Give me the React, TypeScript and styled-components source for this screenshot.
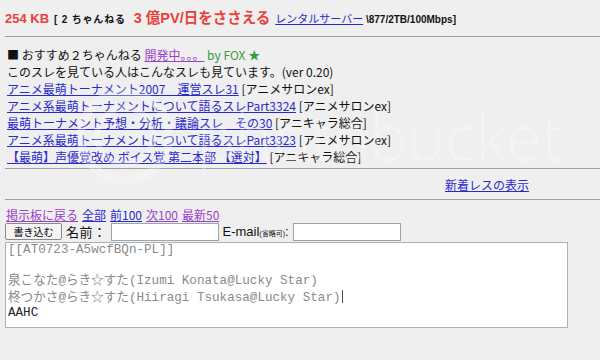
import React from 'react';
import styled, { createGlobalStyle } from 'styled-components';

const GlobalStyle = createGlobalStyle`
  html, body {
    margin: 0;
    padding: 0;
    background: #efefef;
  }
  body {
    font-family: 'Noto Sans CJK JP', 'Liberation Sans', sans-serif;
    font-size: 12px;
    color: #111;
  }
`;

const Page = styled.div`
  position: relative;
  width: 600px;
  height: 360px;
  overflow: hidden;
  padding: 0 0 0 5px;
  box-sizing: border-box;
`;

const TopBar = styled.div`
  display: flex;
  align-items: baseline;
  height: 36px;
  padding-top: 6px;
  box-sizing: border-box;
  white-space: nowrap;
`;

const Size = styled.b`
  color: #e8413a;
  font-family: 'Liberation Sans', sans-serif;
  font-size: 13px;
  margin-right: 5px;
`;

const Small = styled.b<{ $spaced?: boolean }>`
  font-size: 10px;
  font-family: 'Liberation Sans', 'Noto Sans CJK JP', sans-serif;
  letter-spacing: ${(p) => (p.$spaced ? '0.8px' : '0')};
  margin-right: ${(p) => (p.$spaced ? '8px' : '0')};
`;

const Slogan = styled.b`
  color: #e8413a;
  font-size: 14.5px;
  font-family: 'Liberation Sans', 'Noto Sans CJK JP', sans-serif;
  margin-right: 5px;
`;

const HeadLink = styled.a`
  color: #2a2acc;
  font-size: 11px;
  text-decoration: underline;
`;

const Rule = styled.hr`
  border: 0;
  border-top: 1px solid #a0a0a0;
  margin: 0;
`;

const Block = styled.div`
  padding: 9px 0 3px 2px;
  line-height: 17px;
`;

const Line = styled.div`
  white-space: nowrap;
`;

const Link = styled.a<{ $visited?: boolean }>`
  color: ${(p) => (p.$visited ? '#9a3fc8' : '#2a2acc')};
  text-decoration: underline;
`;

const Green = styled.span`
  color: #3a9a3a;
`;

const Newest = styled.div`
  height: 30px;
  display: flex;
  align-items: center;
  padding-left: 440px;
`;

const Nav = styled.div`
  display: flex;
  gap: 4px;
  padding: 7px 0 0 1px;
  line-height: 16px;
`;

const FormRow = styled.div`
  display: flex;
  align-items: center;
  gap: 4px;
  height: 19px;
  margin-top: -1px;
`;

const Button = styled.button`
  width: 57px;
  height: 17px;
  padding: 0;
  font-size: 10px;
  font-family: 'Noto Sans CJK JP', sans-serif;
  background: #f4f4f4;
  border: 1px solid #8a8a8a;
  border-radius: 2px;
  line-height: 14px;
`;

const Label = styled.span<{ $spaced?: boolean }>`
  font-size: 13px;
  letter-spacing: ${(p) => (p.$spaced ? '0.5px' : '0')};
  font-family: 'Liberation Sans', 'Noto Sans CJK JP', sans-serif;
`;

const Tiny = styled.span`
  font-size: 7px;
`;

const Input = styled.div`
  width: 108px;
  height: 18px;
  background: #fff;
  border: 1px solid #9aa4ae;
  box-sizing: border-box;
`;

const TextArea = styled.div`
  width: 563px;
  height: 86px;
  margin-top: 1px;
  background: #fff;
  border: 1px solid #a8b0b8;
  box-sizing: border-box;
  padding: 0 2px;
  font-family: 'Liberation Mono', 'Noto Sans CJK JP', monospace;
  font-size: 12.6px;
  line-height: 15.5px;
  color: #8a8a8a;
  white-space: pre;
`;

const Dark = styled.span`
  color: #222;
`;

const Caret = styled.span`
  display: inline-block;
  width: 1px;
  height: 13px;
  background: #555;
  vertical-align: -2px;
  margin-left: 1px;
`;

const Watermark = styled.div`
  position: absolute;
  left: 75px;
  top: 86px;
  display: flex;
  align-items: center;
  gap: 22px;
  opacity: 0.3;
  pointer-events: none;
`;

const Mark = styled.span`
  font-family: 'Open Sans', 'Liberation Sans', sans-serif;
  font-size: 64px;
  font-weight: 300;
  color: #fff;
`;

const App = (): JSX.Element => (
  <Page>
    <GlobalStyle />
    <TopBar>
      <Size>254 KB</Size>
      <Small $spaced>[ 2 ちゃんねる</Small>
      <Slogan>3 億PV/日をささえる</Slogan>
      <HeadLink href="#">レンタルサーバー</HeadLink>
      <Small>&nbsp;\877/2TB/100Mbps]</Small>
    </TopBar>
    <Rule />
    <Block>
      <Line>
        ■ おすすめ２ちゃんねる <Link href="#" $visited>開発中。。。</Link> <Green>by FOX ★</Green>
      </Line>
      <Line>このスレを見ている人はこんなスレも見ています。(ver 0.20)</Line>
      <Line>
        <Link href="#">アニメ最萌トーナメント2007　運営スレ31</Link> [アニメサロンex]
      </Line>
      <Line>
        <Link href="#">アニメ系最萌トーナメントについて語るスレPart3324</Link> [アニメサロンex]
      </Line>
      <Line>
        <Link href="#">最萌トーナメント予想・分析・議論スレ　その30</Link> [アニキャラ総合]
      </Line>
      <Line>
        <Link href="#">アニメ系最萌トーナメントについて語るスレPart3323</Link> [アニメサロンex]
      </Line>
      <Line>
        <Link href="#">【最萌】声優覚改め ボイス覚 第二本部 【選対】</Link> [アニキャラ総合]
      </Line>
    </Block>
    <Rule />
    <Newest>
      <Link href="#">新着レスの表示</Link>
    </Newest>
    <Rule />
    <Nav>
      <Link href="#" $visited>掲示板に戻る</Link>
      <Link href="#">全部</Link>
      <Link href="#">前100</Link>
      <Link href="#" $visited>次100</Link>
      <Link href="#" $visited>最新50</Link>
    </Nav>
    <FormRow>
      <Button>書き込む</Button>
      <Label $spaced>名前：</Label>
      <Input />
      <Label>
        E-mail<Tiny>(省略可)</Tiny>:
      </Label>
      <Input />
    </FormRow>
    <TextArea>
      {'[[AT0723-A5wcfBQn-PL]]\n\n泉こなた@らき☆すた(Izumi Konata@Lucky Star)\n柊つかさ@らき☆すた(Hiiragi Tsukasa@Lucky Star)'}
      <Caret />
      {'\n'}
      <Dark>AAHC</Dark>
    </TextArea>
    <Watermark>
      <svg width="100" height="100" viewBox="0 0 100 100">
        <circle cx="50" cy="50" r="44" fill="none" stroke="#fff" strokeWidth="8" />
        <circle cx="50" cy="50" r="28" fill="none" stroke="#fff" strokeWidth="6" />
      </svg>
      <Mark>photobucket</Mark>
    </Watermark>
  </Page>
);

export default App;
